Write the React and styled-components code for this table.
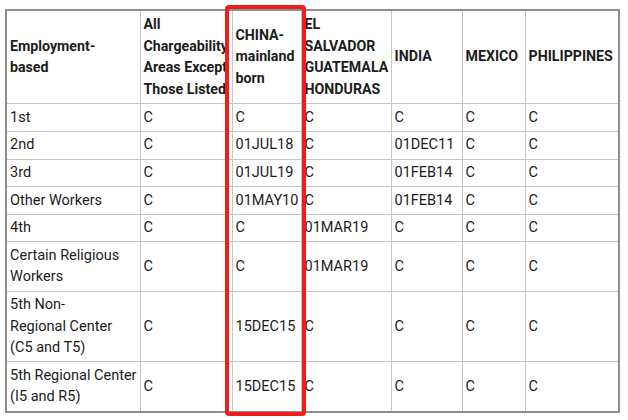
import React from 'react';
import styled, { createGlobalStyle } from 'styled-components';

const GlobalStyle = createGlobalStyle`
  html, body {
    margin: 0;
    padding: 0;
    background: #ffffff;
  }
  body {
    font-family: Roboto, 'Liberation Sans', sans-serif;
    color: #1c1c1c;
  }
`;

const Page = styled.div`
  width: 628px;
  height: 420px;
  padding: 9px 0 0 5px;
  box-sizing: border-box;
  overflow: hidden;
`;

const TableWrap = styled.div`
  position: relative;
  width: 613px;
`;

const Table = styled.table`
  width: 613px;
  table-layout: fixed;
  border-collapse: collapse;
  border: 2px solid #8e8e8e;
  font-size: 14.5px;
  line-height: 21.6px;
`;

const HeadCell = styled.th`
  border: 1px solid #c6c6c6;
  padding: 3px 4px 3px 3px;
  text-align: left;
  vertical-align: middle;
  font-size: 14.2px;
  font-weight: 700;
  overflow: hidden;
  white-space: ${p => (p.$nowrap ? 'nowrap' : 'normal')};
`;

const Cell = styled.td`
  border: 1px solid #c6c6c6;
  padding: 2.5px 3px 2.5px 3px;
  vertical-align: middle;
  overflow: hidden;
  white-space: nowrap;
`;

const Highlight = styled.div`
  position: absolute;
  left: 220px;
  top: -4px;
  width: 81px;
  height: 411px;
  box-sizing: border-box;
  border: 4px solid #f01d1d;
  border-radius: 4px;
  pointer-events: none;
`;

const widths = [134, 92, 69, 90, 71, 63, 94];

const headers = [
  ['Employment-', 'based'],
  ['All', 'Chargeability', 'Areas Except', 'Those Listed'],
  'CHINA-mainland born',
  'EL SALVADOR GUATEMALA HONDURAS',
  'INDIA',
  'MEXICO',
  'PHILIPPINES',
];

const rows = [
  ['1st', 'C', 'C', 'C', 'C', 'C', 'C'],
  ['2nd', 'C', '01JUL18', 'C', '01DEC11', 'C', 'C'],
  ['3rd', 'C', '01JUL19', 'C', '01FEB14', 'C', 'C'],
  ['Other Workers', 'C', '01MAY10', 'C', '01FEB14', 'C', 'C'],
  ['4th', 'C', 'C', '01MAR19', 'C', 'C', 'C'],
  [['Certain Religious', 'Workers'], 'C', 'C', '01MAR19', 'C', 'C', 'C'],
  [['5th Non-', 'Regional Center', '(C5 and T5)'], 'C', '15DEC15', 'C', 'C', 'C', 'C'],
  [['5th Regional Center', '(I5 and R5)'], 'C', '15DEC15', 'C', 'C', 'C', 'C'],
];

// strings wrap by themselves, arrays are given line by line
const renderText = value =>
  Array.isArray(value)
    ? value.map((line, i) => (
        <React.Fragment key={i}>
          {line}
          {i < value.length - 1 && <br />}
        </React.Fragment>
      ))
    : value;

export default function App() {
  return (
    <Page>
      <GlobalStyle />
      <TableWrap>
        <Table>
          <colgroup>
            {widths.map((w, i) => (
              <col key={i} style={{ width: w }} />
            ))}
          </colgroup>
          <thead>
            <tr>
              {headers.map((h, i) => (
                <HeadCell key={i} $nowrap={Array.isArray(h)}>
                  {renderText(h)}
                </HeadCell>
              ))}
            </tr>
          </thead>
          <tbody>
            {rows.map((r, i) => (
              <tr key={i}>
                {r.map((c, j) => (
                  <Cell key={j}>{renderText(c)}</Cell>
                ))}
              </tr>
            ))}
          </tbody>
        </Table>
        <Highlight />
      </TableWrap>
    </Page>
  );
}
